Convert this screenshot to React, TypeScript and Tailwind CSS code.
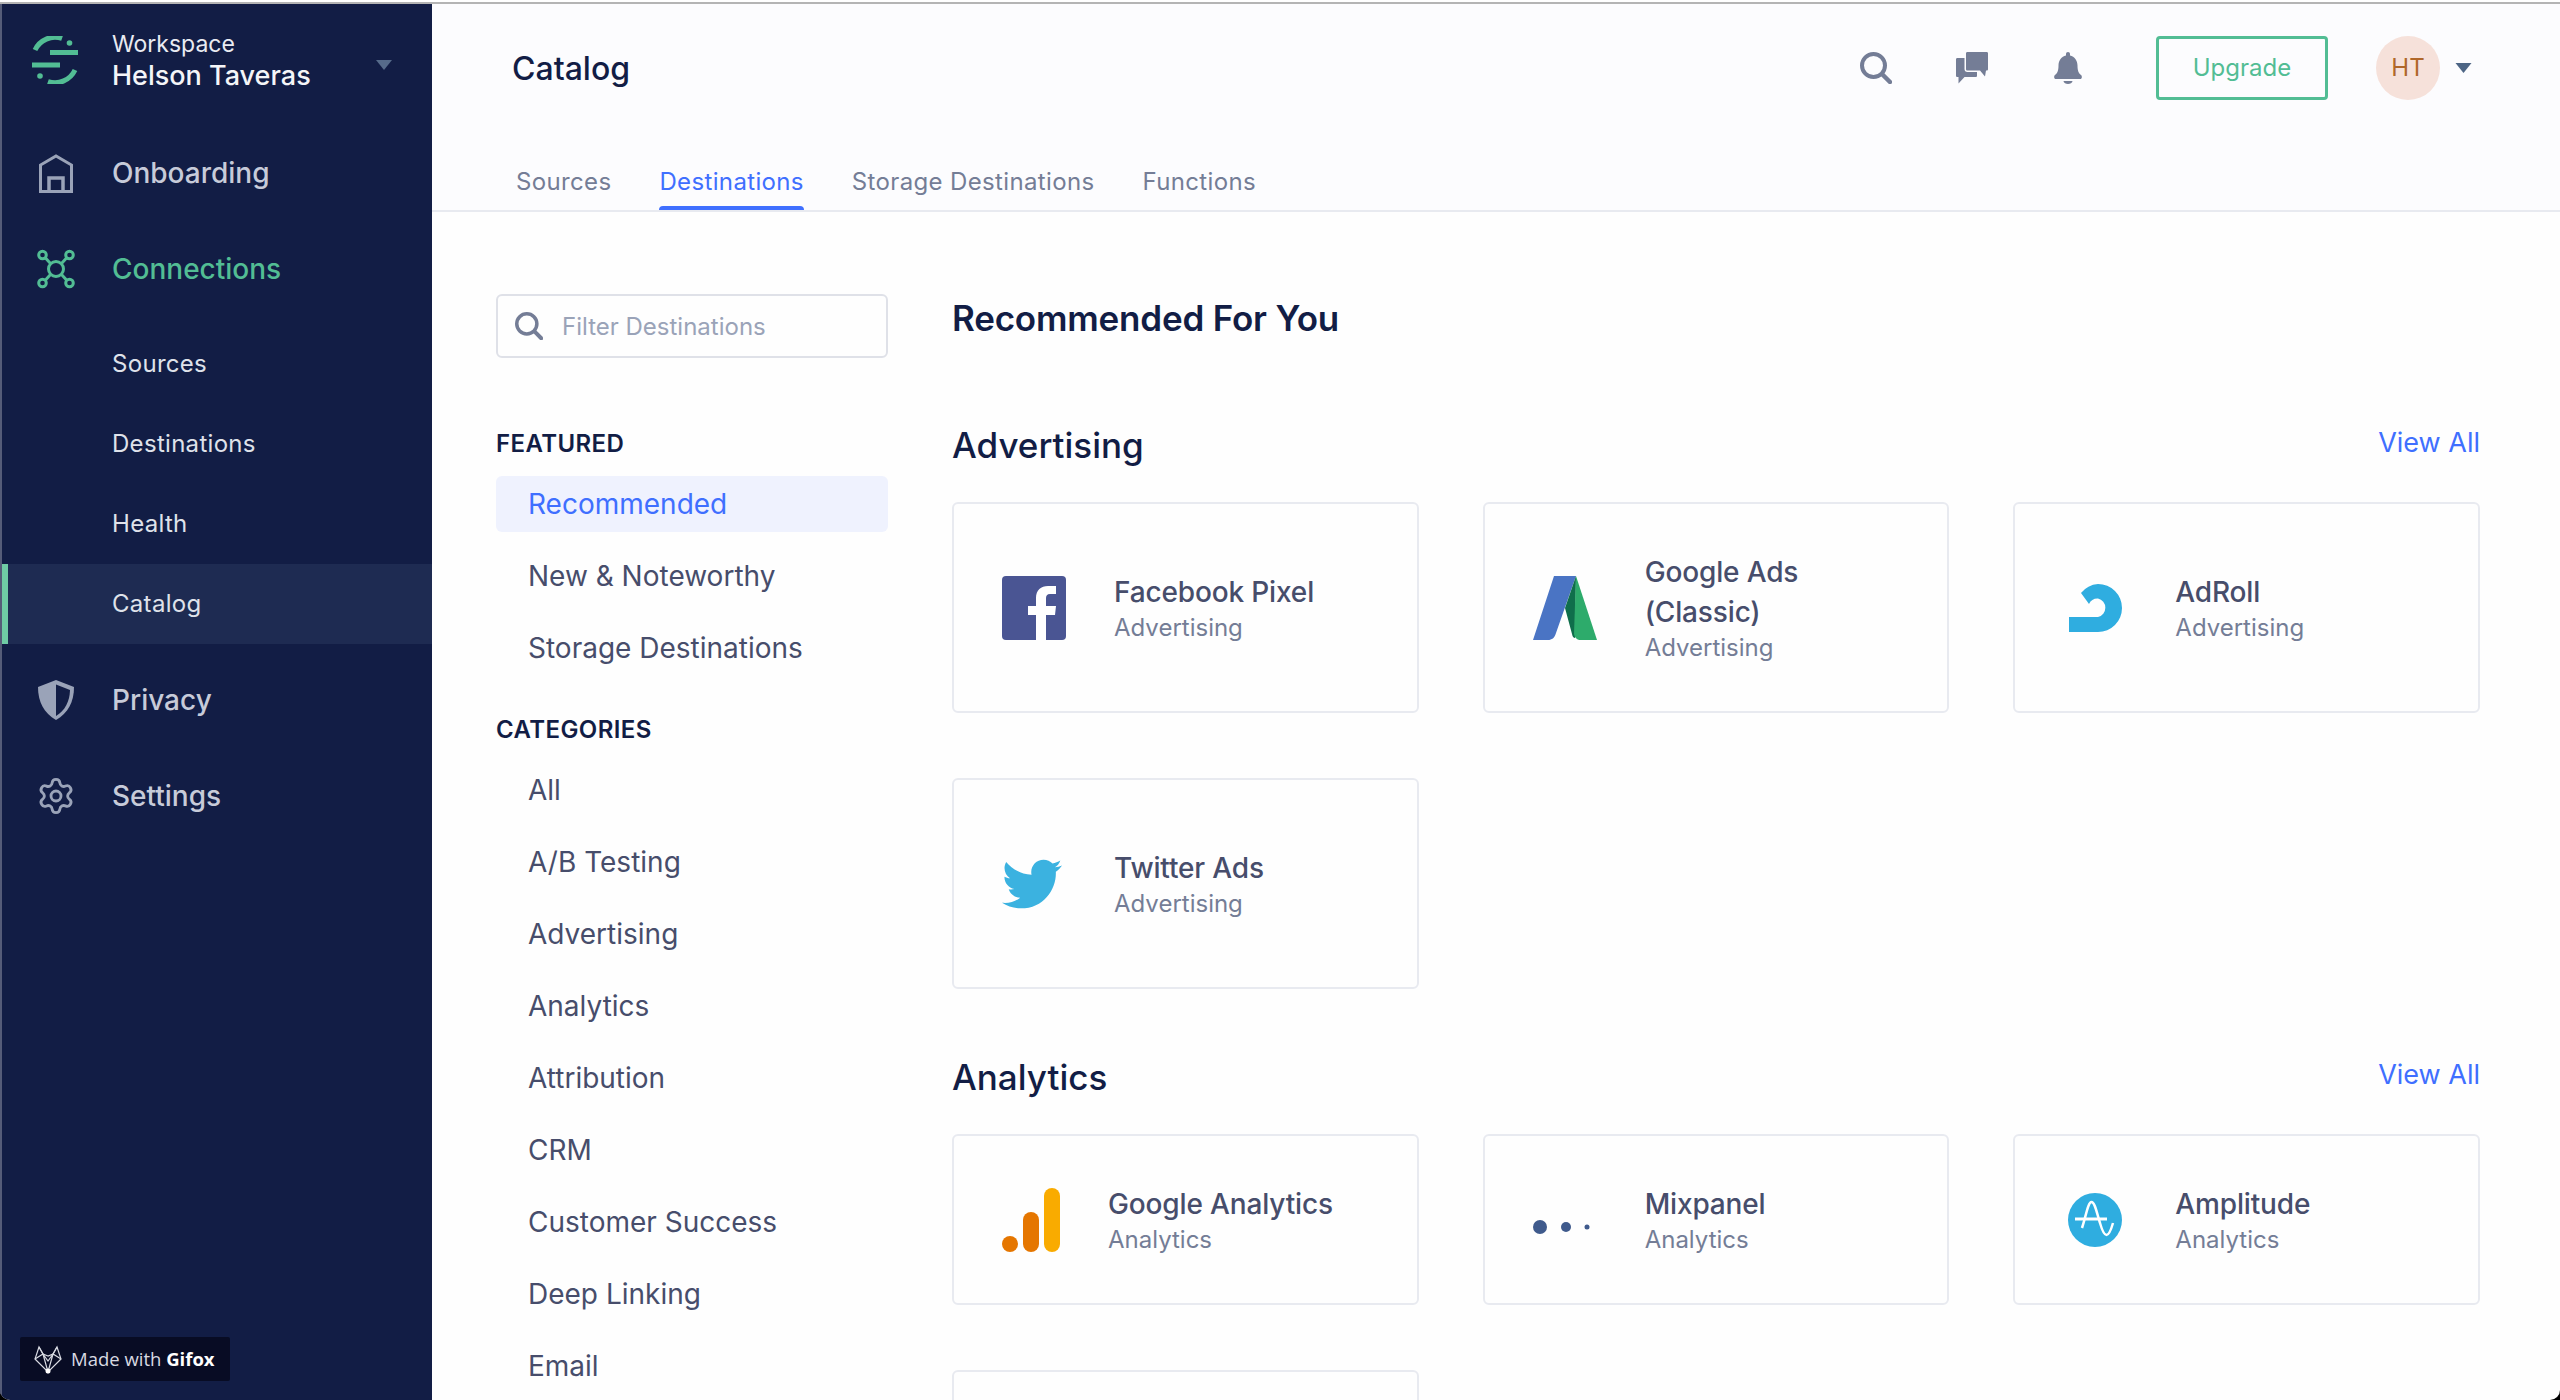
import { Settings } from 'lucide-react';
import { FaTwitter } from 'react-icons/fa';
import type { ReactNode } from 'react';

const SearchIcon = ({ className }: { className: string }) => (
  <svg viewBox="0 0 32 32" className={className} fill="none" stroke="#747d96">
    <circle cx="13.500" cy="13.500" r="11.500" strokeWidth="4" />
    <path d="M22.500 22.500l7.500 7.500" strokeWidth="4.500" strokeLinecap="round" />
  </svg>
);

const Caret = ({ className }: { className: string }) => (
  <svg viewBox="0 0 16 10" className={className} fill="currentColor">
    <path d="M0 0h16L8 10z" />
  </svg>
);

function SegmentLogo() {
  return (
    <svg viewBox="32 36 46 48" className="h-12 w-[46px] shrink-0" fill="none" stroke="#52bd94" strokeWidth="5">
      <path d="M35 50A22 22 0 0 1 62 38.5" />
      <path d="M75 70A22 22 0 0 1 48 81.5" />
      <path d="M50 52.500H78M32 65H60" />
      <circle cx="69.500" cy="43" r="2.800" fill="#52bd94" stroke="none" />
      <circle cx="40" cy="76" r="2.800" fill="#52bd94" stroke="none" />
    </svg>
  );
}

const HouseIcon = () => (
  <svg viewBox="38 152 36 41" className="h-[41px] w-9" fill="none" stroke="#9aa3b8" strokeWidth="3">
    <path d="M40.500 190.500V164L56 155l15.500 9v26.500z" />
    <path d="M49 190.500V177h14v13.500" strokeWidth="3.500" />
  </svg>
);

const ConnectionsIcon = () => (
  <svg viewBox="36 248 40 40" className="h-10 w-10" fill="none" stroke="#52bd94" strokeWidth="3">
    <circle cx="56" cy="268" r="7.500" />
    <circle cx="42.500" cy="254" r="3.800" />
    <circle cx="69.500" cy="254" r="3.800" />
    <circle cx="42.500" cy="282" r="3.800" />
    <circle cx="69.500" cy="282" r="3.800" />
    <path d="M45.500 257l5 5.500M66.500 257l-5 5.500M45.500 279l5-5.500M66.500 279l-5-5.500" />
  </svg>
);

const ShieldIcon = () => (
  <svg viewBox="38 680 36 40" className="h-10 w-9">
    <path d="M56 680l18 7c0 15-6 26-18 33-12-7-18-18-18-33z" fill="#9aa3b8" />
    <path d="M56 684.500l14 5.500c-.3 11.500-5 20.500-14 26z" fill="#121d45" />
  </svg>
);

const ChatIcon = () => (
  <svg viewBox="0 0 32 32" className="h-8 w-8" fill="#747d96">
    <path d="M10 1.500C10 .5 10.500 0 11.500 0h19c1 0 1.500.5 1.500 1.500V17c0 1-.5 1.500-1.500 1.500H30L29 24.500 24 18.500H11.500c-1 0-1.500-.5-1.500-1.500z" />
    <path d="M1.500 6H8.500V17c0 2 1 3 3 3H21L21 23.500c0 1-.5 1.500-1.500 1.500H8.500L2.500 31.500V25H1.500C.5 25 0 24.500 0 23.500V7.500C0 6.500.5 6 1.500 6z" />
  </svg>
);

const BellIcon = () => (
  <svg viewBox="0 0 28 32" className="h-8 w-7" fill="#747d96">
    <path d="M14 0c1.200 0 2 .8 2 2v1.500c4.500 1 7.500 5 7.500 10 0 5 1 7.500 3.500 9.500 1.500 1.200 1 4-1 4H2c-2 0-2.500-2.800-1-4 2.500-2 3.500-4.500 3.500-9.500 0-5 3-9 7.500-10V2c0-1.200.8-2 2-2z" />
    <path d="M9.500 29h9c0 2-2.500 3-4.500 3s-4.500-1-4.500-3z" />
  </svg>
);

const FacebookLogo = () => (
  <svg viewBox="0 0 64 64" className="h-16 w-16">
    <rect width="64" height="64" rx="4" fill="#4a5593" />
    <path d="M34 64V39h-8v-9h8v-8c0-8 5-12 12-12h8v8h-6c-3 0-4 2-4 4v8h10l-1 9h-9v25z" fill="#fff" />
  </svg>
);

const GoogleAdsLogo = () => (
  <svg viewBox="0 0 64 64" className="h-16 w-16">
    <path d="M21 0h22L23 57c-1.500 5-4 7-8 7H0z" fill="#4a74c4" />
    <path d="M43 0L32 32l7 26c.5 3 2 4 3 4z" fill="#0f6e4b" />
    <path d="M43 0l21 64H48c-4 0-6-2-7-6z" fill="#2dab6b" />
  </svg>
);

const AdRollLogo = () => (
  <svg viewBox="0 0 64 64" className="h-16 w-16">
    <path d="M18 17A24 24 0 0 1 35 8a24 24 0 0 1 0 48H6V41h29a9.500 9.500 0 0 0 0-18.500A9.500 9.500 0 0 0 26 28z" fill="#2fade0" />
  </svg>
);

const TwitterLogo = () => (
  <div className="w-16">
    <FaTwitter className="h-16 w-[60px]" color="#3bb2e0" />
  </div>
);

const AnalyticsLogo = () => (
  <svg viewBox="0 0 58 64" className="h-16 w-[58px]">
    <rect x="0" y="48" width="16" height="16" rx="8" fill="#e57600" />
    <rect x="21" y="24" width="16" height="40" rx="8" fill="#e57600" />
    <rect x="42" y="0" width="16" height="64" rx="8" fill="#f9ab00" />
  </svg>
);

const MixpanelLogo = () => (
  <svg viewBox="0 0 64 64" className="h-16 w-16" fill="#3f5a8c">
    <circle cx="7" cy="39" r="7" />
    <circle cx="33" cy="39" r="5" />
    <circle cx="54" cy="39" r="2.500" />
  </svg>
);

const AmplitudeLogo = () => (
  <svg viewBox="0 0 64 64" className="h-16 w-16">
    <circle cx="32" cy="32" r="27" fill="#2fade0" />
    <path d="M19 40C23 28 25 14 28.500 14 32 14 34 26 37 35c2 7 4 12 6.500 12S48 42 50 35" fill="none" stroke="#fff" strokeWidth="2.500" />
    <path d="M12 31h32" stroke="#fff" strokeWidth="3" />
  </svg>
);

const FoxIcon = () => (
  <svg viewBox="0 0 30 30" className="h-[30px] w-[30px]" fill="none" stroke="#d8dae2" strokeWidth="1.200">
    <path d="M15 12l-5-2-4-7-4 12 13 13 13-13-4-12-4 7z" />
    <path d="M2 15l8-5 5 18 5-18 8 5M6 3l4 7M24 3l-4 7M10 10l5 7 5-7" />
    <circle cx="15" cy="27" r="2.500" fill="#fff" stroke="none" />
  </svg>
);

const subNav = ['Sources', 'Destinations', 'Health', 'Catalog'];
const tabs = ['Sources', 'Destinations', 'Storage Destinations', 'Functions'];
const featured = ['New & Noteworthy', 'Storage Destinations'];
const categories = ['All', 'A/B Testing', 'Advertising', 'Analytics', 'Attribution', 'CRM', 'Customer Success', 'Deep Linking', 'Email'];

function NavItem({ icon, label, active }: { icon: ReactNode; label: string; active?: boolean }) {
  return (
    <div className="flex h-24 items-center">
      <div className="flex w-[110px] justify-center pr-[2px]">{icon}</div>
      <span className={`text-[28px] font-medium ${active ? 'text-[#52bd94]' : 'text-[#c7cbd9]'}`}>{label}</span>
    </div>
  );
}

function Sidebar() {
  return (
    <aside className="flex w-[432px] shrink-0 flex-col border-l-2 border-[#555c78] bg-[#121d45]">
      <div className="flex h-[121px] items-start pt-6 pl-[30px]">
        <div className="mt-[8px]"><SegmentLogo /></div>
        <div className="ml-[34px] flex-1">
          <div className="text-[23px] leading-[32px] text-[#e9ebf2]">Workspace</div>
          <div className="text-[27px] leading-[32px] font-medium text-[#f4f5f8]">Helson Taveras</div>
        </div>
        <Caret className="mt-[32px] mr-[40px] h-[10px] w-4 text-[#566b8a]" />
      </div>
      <NavItem icon={<HouseIcon />} label="Onboarding" />
      <NavItem icon={<ConnectionsIcon />} label="Connections" active />
      <div className="pt-[7px] pb-2">
        {subNav.map((item) => (
          <div
            key={item}
            className={`flex h-20 items-center text-2xl tracking-[0.3px] text-[#dfe2ea] ${item === 'Catalog' ? 'border-l-[6px] border-[#6fcba5] bg-[#1e2b52] pl-[104px]' : 'pl-[110px]'}`}
          >
            {item}
          </div>
        ))}
      </div>
      <NavItem icon={<ShieldIcon />} label="Privacy" />
      <NavItem icon={<Settings size={40} color="#9aa3b8" strokeWidth={1.7} />} label="Settings" />
      <div className="mt-auto mb-[19px] ml-[18px] flex h-[44px] w-[210px] items-center gap-2 rounded-[2px] bg-[#080c24] pl-[13px] font-['Open_Sans',sans-serif] text-[18.5px] text-[#d8dae2]">
        <FoxIcon />
        <span className="whitespace-nowrap">
          Made with <b className="font-bold text-white">Gifox</b>
        </span>
      </div>
    </aside>
  );
}

function Header() {
  return (
    <header className="h-[208px] shrink-0 border-b-2 border-[#e8eaf0] bg-[#fcfcfe] pl-20">
      <div className="flex h-[128px] items-start pt-8 pr-[88px]">
        <h1 className="mt-px flex-1 text-[32px] leading-[64px] font-medium text-[#121d45]">Catalog</h1>
        <div className="flex items-center pt-[16px]">
          <SearchIcon className="h-8 w-8" />
          <div className="ml-16"><ChatIcon /></div>
          <div className="ml-[66px]"><BellIcon /></div>
        </div>
        <button className="ml-[74px] h-16 w-[172px] rounded-[4px] border-[3px] border-[#52bd94] text-2xl text-[#52bd94]">Upgrade</button>
        <div className="ml-12 flex h-16 w-16 items-center justify-center rounded-full bg-[#f6e1da] text-2xl text-[#b0672a]">HT</div>
        <Caret className="mt-[27px] ml-[15px] h-[10px] w-[17px] text-[#4d6585]" />
      </div>
      <nav className="-ml-[2px] flex h-[78px] gap-9">
        {tabs.map((t) => (
          <div
            key={t}
            className={`flex h-[78px] flex-col px-[6px] pt-8 text-2xl leading-[36px] tracking-[0.35px] ${t === 'Destinations' ? 'text-[#3f6fff]' : 'text-[#747d96]'}`}
          >
            <span>{t}</span>
            {t === 'Destinations' && <div className="mt-auto h-1 rounded-t-[4px] bg-[#3f6fff]" />}
          </div>
        ))}
      </nav>
    </header>
  );
}

function FilterColumn() {
  return (
    <div className="w-[392px] shrink-0 pt-[82px]">
      <div className="flex h-16 items-center rounded-md border-2 border-[#dfe1e8] pl-[17px]">
        <SearchIcon className="h-7 w-7" />
        <span className="mt-[2px] ml-[19px] text-2xl text-[#9aa3b8]">Filter Destinations</span>
      </div>
      <div className="mt-[70px] text-[24px] leading-8 font-semibold tracking-[0.4px] text-[#121d45]">FEATURED</div>
      <div className="mt-4 flex h-14 items-center rounded-md bg-[#eff2fe] pl-8 text-[28px] text-[#3f6fff]">Recommended</div>
      {featured.map((f) => (
        <div key={f} className="mt-[16px] flex h-14 items-center pl-8 text-[28px] text-[#474d6b]">{f}</div>
      ))}
      <div className="mt-[38px] text-[24px] leading-8 font-semibold tracking-[0.4px] text-[#121d45]">CATEGORIES</div>
      {categories.map((c, i) => (
        <div key={c} className={`flex h-14 items-center pl-8 text-[28px] text-[#474d6b] ${i === 0 ? 'mt-4' : 'mt-[16px]'}`}>{c}</div>
      ))}
    </div>
  );
}

type Dest = { name: ReactNode; kind: string; logo: ReactNode };

const advertising: Dest[] = [
  { name: 'Facebook Pixel', kind: 'Advertising', logo: <FacebookLogo /> },
  { name: <>Google Ads<br />(Classic)</>, kind: 'Advertising', logo: <GoogleAdsLogo /> },
  { name: 'AdRoll', kind: 'Advertising', logo: <AdRollLogo /> },
  { name: 'Twitter Ads', kind: 'Advertising', logo: <TwitterLogo /> },
];

const analytics: Dest[] = [
  { name: 'Google Analytics', kind: 'Analytics', logo: <AnalyticsLogo /> },
  { name: 'Mixpanel', kind: 'Analytics', logo: <MixpanelLogo /> },
  { name: 'Amplitude', kind: 'Analytics', logo: <AmplitudeLogo /> },
];

function Card({ dest, tall }: { dest: Dest; tall: boolean }) {
  return (
    <div className={`flex items-center rounded-md border-2 border-[#e8eaf0] pl-12 ${tall ? 'h-[211px]' : 'h-[171px]'}`}>
      <div className="mr-12 flex shrink-0 items-center">{dest.logo}</div>
      <div>
        <div className="text-[28px] leading-10 font-medium tracking-[-0.15px] text-[#474d6b]">{dest.name}</div>
        <div className="text-2xl leading-8 text-[#747d96]">{dest.kind}</div>
      </div>
    </div>
  );
}

function Section({ title, items, tall, more }: { title: string; items: Dest[]; tall: boolean; more?: boolean }) {
  return (
    <section>
      <div className="flex h-[48px] items-center justify-between">
        <h2 className="-mt-[2px] text-[35px] font-medium text-[#121d45]">{title}</h2>
        <a className="-mt-[6px] text-[27px] text-[#3f6fff]">View All</a>
      </div>
      <div className="mt-8 grid grid-cols-3 gap-x-16 gap-y-[65px]">
        {items.map((d, i) => (
          <Card key={i} dest={d} tall={tall} />
        ))}
        {more && <div className="h-[171px] rounded-md border-2 border-[#e8eaf0]" />}
      </div>
    </section>
  );
}

export default function App() {
  return (
    <div className="h-[1400px] overflow-hidden bg-black font-['Inter',sans-serif]">
      <div className="h-[2px] bg-white" />
      <div className="h-[2px] bg-[#b4b4b4]" />
      <div className="flex h-[1396px] overflow-hidden rounded-b-[10px] bg-[#fefefe]">
        <Sidebar />
        <main className="flex min-w-0 flex-1 flex-col">
          <Header />
          <div className="flex gap-16 pr-20 pl-16">
            <FilterColumn />
            <div className="flex-1 pt-[82px]">
              <h2 className="text-[35px] leading-[48px] font-semibold tracking-[-0.2px] text-[#121d45]">Recommended For You</h2>
              <div className="mt-[80px]">
                <Section title="Advertising" items={advertising} tall />
              </div>
              <div className="mt-[65px]">
                <Section title="Analytics" items={analytics} tall={false} more />
              </div>
            </div>
          </div>
        </main>
      </div>
    </div>
  );
}
